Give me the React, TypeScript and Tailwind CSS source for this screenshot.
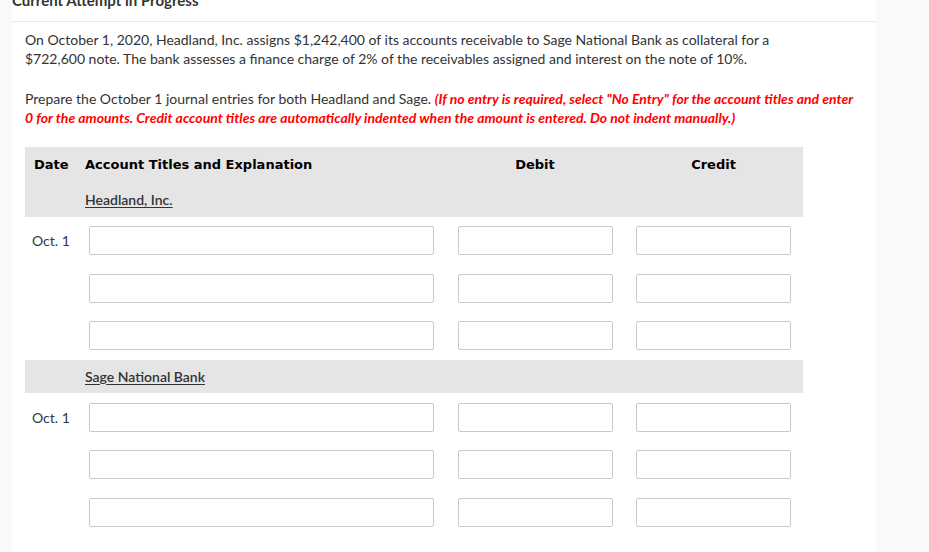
// Journal entry question panel

import React from 'react';

type Section = {
  company: string;
  rows: number;
};

const sections: Section[] = [
  { company: 'Headland, Inc.', rows: 3 },
  { company: 'Sage National Bank', rows: 3 },
];

const lato = "font-['Lato','Open_Sans',sans-serif]";
const headFont = "font-['Verdana','DejaVu_Sans',sans-serif]";

function EntryRows({ count }: { count: number }) {
  return (
    <div className="flex flex-col gap-[18.5px] py-[9.5px]">
      {Array.from({ length: count }).map((_, i) => (
        <div key={i} className="flex items-center">
          <div className={`w-[60px] pl-[7px] text-[14px] leading-[19px] text-[#2f3b48] ${lato}`}>
            {i === 0 ? 'Oct. 1' : ''}
          </div>
          <div className="w-[361px] pl-[4px]">
            <input
              type="text"
              className="block h-[29px] w-[345px] rounded-[2px] border border-[#c9c9c9] bg-white"
            />
          </div>
          <div className="flex w-[178px] justify-center">
            <input
              type="text"
              className="block h-[29px] w-[155px] rounded-[2px] border border-[#c9c9c9] bg-white"
            />
          </div>
          <div className="flex w-[179px] justify-center">
            <input
              type="text"
              className="block h-[29px] w-[155px] rounded-[2px] border border-[#c9c9c9] bg-white"
            />
          </div>
        </div>
      ))}
    </div>
  );
}

export default function App() {
  return (
    <div className="flex min-h-[552px] bg-[#f9f9f9]">
      <div className="ml-[12px] w-[864px] bg-white pb-4">
        {/* Title bar, scrolled partly out of view */}
        <div className="flex h-[22px] items-end border-b border-[#e8e8e8]">
          <h2 className={`mb-[11px] text-[15px] font-bold leading-[20px] text-[#333] ${lato}`}>
            Current Attempt in Progress
          </h2>
        </div>

        <div className={`pl-[13px] pt-[8px] text-[14px] leading-[19px] text-[#333] ${lato}`}>
          <p className="mb-[21px] whitespace-nowrap">
            On October 1, 2020, Headland, Inc. assigns $1,242,400 of its accounts receivable to Sage National Bank as collateral for a
            <br />
            $722,600 note. The bank assesses a finance charge of 2% of the receivables assigned and interest on the note of 10%.
          </p>
          <p className="mb-[20px] whitespace-nowrap">
            Prepare the October 1 journal entries for both Headland and Sage.{' '}
            <span className="font-bold italic text-[#ff0000]">
              (If no entry is required, select "No Entry" for the account titles and enter
              <br />
              0 for the amounts. Credit account titles are automatically indented when the amount is entered. Do not indent manually.)
            </span>
          </p>
        </div>

        {/* Journal table */}
        <div className="ml-[13px] w-[778px]">
          {sections.map((s, idx) => (
            <div key={s.company}>
              <div className="bg-[#e5e5e5]">
                {idx === 0 && (
                  <div className={`flex h-[36px] items-center text-[13px] font-bold text-black ${headFont}`}>
                    <div className="w-[60px] pl-[9px]">Date</div>
                    <div className="w-[361px]">Account Titles and Explanation</div>
                    <div className="w-[178px] text-center">Debit</div>
                    <div className="w-[179px] text-center">Credit</div>
                  </div>
                )}
                <div className="flex h-[33.5px] items-center">
                  <div className="w-[60px]" />
                  <span className={`text-[14px] font-semibold text-[#333] underline underline-offset-2 ${lato}`}>
                    {s.company}
                  </span>
                </div>
              </div>
              <EntryRows count={s.rows} />
            </div>
          ))}
        </div>
      </div>
    </div>
  );
}
